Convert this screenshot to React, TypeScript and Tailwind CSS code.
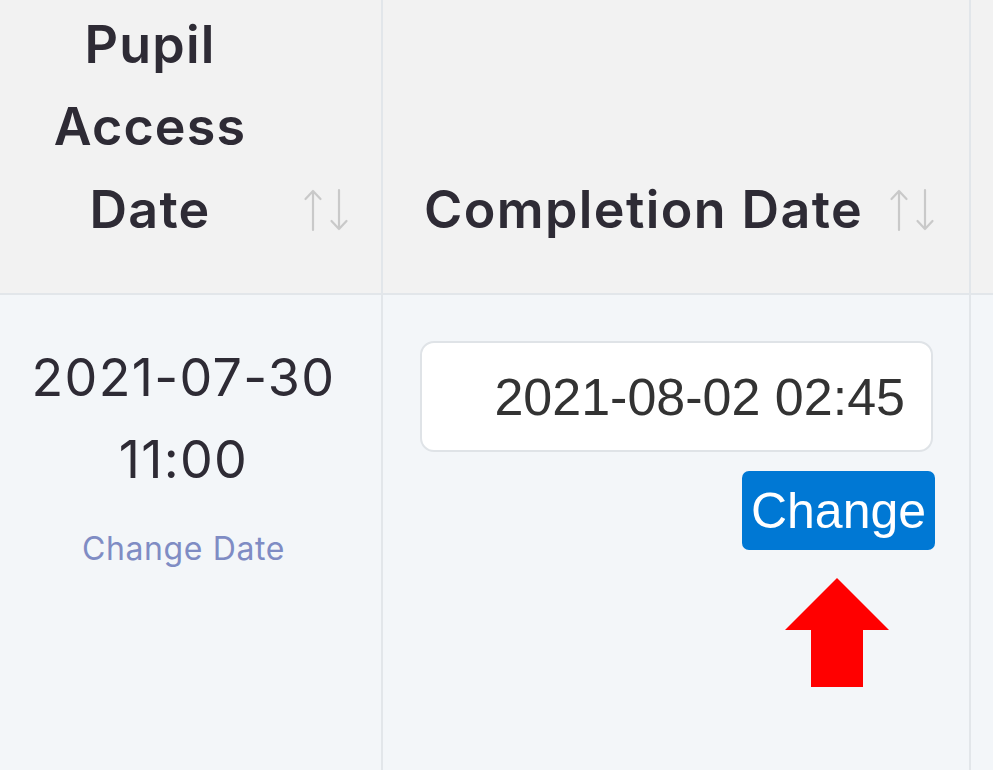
import React from 'react';

const SortIcon: React.FC = () => (
  <svg width="46" height="44" viewBox="0 0 46 44" fill="none" stroke="#c9c9c9" strokeWidth="2.2" strokeLinecap="round" strokeLinejoin="round">
    <path d="M10 42V3M2.5 11L10 3l7.5 8" />
    <path d="M36 2v39M28.5 33L36 41l7.5-8" />
  </svg>
);

const App: React.FC = () => {
  return (
    <div className="relative w-[993px] h-[770px] overflow-hidden bg-[#f3f6f9] font-['Inter','Noto_Sans',sans-serif]">
      {/* header row */}
      <div className="flex h-[295px] bg-[#f2f2f2] border-b-2 border-[#e2e6ea]">
        <div className="flex items-end w-[383px] pb-[42px] border-r-2 border-[#e2e6ea]">
          <div className="w-[300px] text-center text-[52px] leading-[82.5px] font-semibold text-[#2e2b35] tracking-[1.2px]">
            Pupil
            <br />
            Access
            <br />
            Date
          </div>
          <div className="ml-[3px] mb-[19px]">
            <SortIcon />
          </div>
        </div>
        <div className="flex items-end w-[588px] pl-[41px] pb-[42px] border-r-2 border-[#e2e6ea]">
          <div className="text-[52px] leading-[82.5px] font-semibold text-[#2e2b35] whitespace-nowrap tracking-[1.4px]">
            Completion Date
          </div>
          <div className="ml-[26px] mb-[19px]">
            <SortIcon />
          </div>
        </div>
        <div className="flex-1" />
      </div>

      {/* body row */}
      <div className="flex h-[475px]">
        <div className="w-[383px] pt-[42px] pr-[14px] text-center border-r-2 border-[#e2e6ea]">
          <div className="text-[52px] leading-[82px] text-[#2e2b35] tracking-[1.3px]">
            2021-07-30
            <br />
            11:00
          </div>
          <a href="#" className="block mt-[25px] text-[32px] leading-[45px] text-[#7f8cc4] tracking-[0.6px]">
            Change Date
          </a>
        </div>
        <div className="flex flex-col items-start w-[588px] pl-[37px] pt-[46px] border-r-2 border-[#e2e6ea]">
          <div className="flex items-center justify-end w-[513px] h-[111px] pr-[26px] bg-white border-2 border-[#dfe3e7] rounded-[14px] font-['Liberation_Sans',Arial,sans-serif] text-[52px] text-[#333333]">
            2021-08-02 02:45
          </div>
          <div className="flex justify-end w-[515px] mt-[19px]">
            <button className="h-[79px] w-[193px] rounded-[7px] bg-[#0078d4] text-white font-['Liberation_Sans',Arial,sans-serif] text-[50px] leading-none">
              Change
            </button>
          </div>
        </div>
        <div className="flex-1" />
      </div>

      {/* annotation arrow */}
      <svg className="absolute left-[785px] top-[578px]" width="104" height="109" viewBox="0 0 104 109">
        <path d="M52 0L104 52H78V109H26V52H0Z" fill="#ff0000" />
      </svg>
    </div>
  );
};

export default App;
